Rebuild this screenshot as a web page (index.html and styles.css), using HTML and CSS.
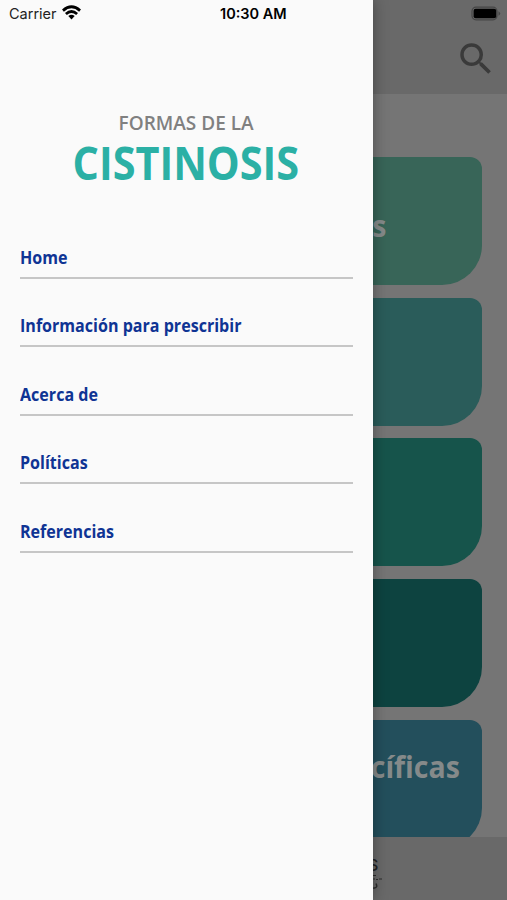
FILE: index.html
```
<!DOCTYPE html>
<html lang="es">
<head>
  <meta charset="UTF-8">
  <meta name="viewport" content="width=device-width, initial-scale=1.0">
  <title>Formas de la Cistinosis</title>
  <link rel="stylesheet" href="styles.css">
</head>
<body>
  <!-- Pantalla principal -->
  <div class="screen">
    <header class="app-bar">
      <svg class="battery" width="30" height="16" viewBox="0 0 30 16">
        <rect x="1" y="1.2" width="25" height="12.6" rx="4" fill="none" stroke="#464646" stroke-width="1.2"/>
        <rect x="2.6" y="2.8" width="22.6" height="9.4" rx="2" fill="#000"/>
        <path d="M27.5 5.2q3.4 2.3 0 4.6z" fill="#464646"/>
      </svg>
      <svg class="search" width="42" height="42" viewBox="0 0 24 24">
        <path fill="#3a3a3a" d="M15.5 14h-.79l-.28-.27A6.471 6.471 0 0 0 16 9.5 6.5 6.5 0 1 0 9.5 16c1.61 0 3.09-.59 4.23-1.57l.27.28v.79l5 4.99L20.49 19l-4.99-5zm-6 0C7.01 14 5 11.99 5 9.5S7.01 5 9.5 5 14 7.01 14 9.5 11.99 14 9.5 14z"/>
      </svg>
    </header>
    <main class="cards">
      <div class="card card-green"><span class="card-text">s</span></div>
      <div class="card card-teal"></div>
      <div class="card card-emerald"></div>
      <div class="card card-dark"></div>
      <div class="card card-blue"><span class="card-text">cíficas</span></div>
    </main>
    <footer class="bottom-bar">
      <span class="bottom-text">S</span>
      <svg width="12" height="16" viewBox="0 0 12 16" fill="none" stroke="#2c2c2c">
        <path d="M0 1.5h5M1 5h3M5 5.500h2M8 5h3M0 7h2"/>
        <path d="M5 9.500q2 4-1.500 4.500T0 13" stroke-width="1.500"/>
      </svg>
    </footer>
  </div>

  <!-- Menú lateral -->
  <aside class="drawer">
    <div class="status-bar">
      <span>Carrier</span>
      <svg class="wifi" width="19" height="15" viewBox="0 0 18 14" fill="none" stroke="#000" stroke-width="2.600">
        <path d="M.9 5.200Q9-2 17.100 5.200"/>
        <path d="M3.700 8.400Q9 3.600 14.300 8.400"/>
        <path d="M6 10.400Q9 8 12 10.400L9 13.600z" fill="#000" stroke="none"/>
      </svg>
      <span class="time">10:30 AM</span>
    </div>
    <h1 class="logo">
      <span class="logo-small">FORMAS DE LA</span>
      <span class="logo-big">CISTINOSIS</span>
    </h1>
    <nav class="menu">
      <a><span>Home</span></a>
      <a><span>Información para prescribir</span></a>
      <a><span>Acerca de</span></a>
      <a><span>Políticas</span></a>
      <a><span>Referencias</span></a>
    </nav>
  </aside>
</body>
</html>
```
FILE: styles.css
```
/* Base */
* {
  box-sizing: border-box;
}
body {
  margin: 0;
  height: 900px;
  overflow: hidden;
  position: relative;
  font-family: "Open Sans", "Noto Sans", sans-serif;
  background-color: #757575;
}

/* Pantalla principal, oscurecida por el menú */
.screen {
  height: 900px;
  display: flex;
  flex-direction: column;
}
.app-bar {
  flex: none;
  height: 94px;
  padding: 6px 6px 0 0;
  display: flex;
  flex-direction: column;
  align-items: flex-end;
  background-color: #696969;
}
.search {
  margin: 16px 4px 0 0;
}
.cards {
  flex: 1;
  min-height: 0;
  overflow: hidden;
  padding: 63px 25px 0;
  display: flex;
  flex-direction: column;
  gap: 12.7px;
}
.card {
  flex: none;
  height: 128px;
  padding-right: 22px;
  display: flex;
  justify-content: flex-end;
  border-radius: 12px 12px 40px 12px;
}
.card-green {
  padding: 47px 96px 0 0;
  background-color: #386558;
}
.card-teal {
  background-color: #2a5c5a;
}
.card-emerald {
  background-color: #16544b;
}
.card-dark {
  background-color: #0d4340;
}
.card-blue {
  padding-top: 25px;
  background-color: #234f5c;
}
.card-text {
  font-size: 31px;
  font-weight: 700;
  line-height: 42px;
  color: #858a8a;
  transform: scaleX(.92);
  transform-origin: right;
}
.bottom-bar {
  flex: none;
  height: 63px;
  padding: 19px 0 0 371px;
  display: flex;
  flex-direction: column;
  background-color: #696969;
}
.bottom-text {
  height: 18px;
  margin-left: -3px;
  font: 500 16px/18px Inter, sans-serif;
  color: #222;
}

/* Menú lateral */
.drawer {
  position: absolute;
  top: 0;
  left: 0;
  width: 372.5px;
  height: 900px;
  background-color: #fafafa;
  box-shadow: 0 0 14px rgba(0, 0, 0, 0.35);
}
.status-bar {
  height: 27px;
  padding-left: 9px;
  display: flex;
  align-items: center;
  font: 14.5px Inter, sans-serif;
  color: #222;
}
.wifi {
  margin: 0 0 2px 5px;
}
.time {
  margin-left: 139.5px;
  font-weight: 600;
  color: #000;
}
.logo {
  margin: 82px 0 0;
  height: 130px;
  display: flex;
  flex-direction: column;
  align-items: center;
  white-space: nowrap;
}
.logo-small {
  font-size: 20px;
  font-weight: 600;
  line-height: 28px;
  color: #808080;
  transform: scaleX(.95);
}
.logo-big {
  margin-top: -1px;
  font-size: 46px;
  line-height: 52px;
  color: #2bb0a5;
  transform: scaleX(.9);
}

/* Opciones */
.menu {
  padding: 0 20px;
}
.menu a {
  height: 68.4px;
  padding-top: 6px;
  display: block;
  font-size: 17px;
  font-weight: 700;
  line-height: 26px;
  color: #0f3494;
}
.menu a::after {
  content: "";
  display: block;
  margin-top: 6px;
  height: 2px;
  background-color: #c6c6c6;
}
.menu span {
  display: inline-block;
  transform: scaleX(.945);
  transform-origin: left;
}
```
